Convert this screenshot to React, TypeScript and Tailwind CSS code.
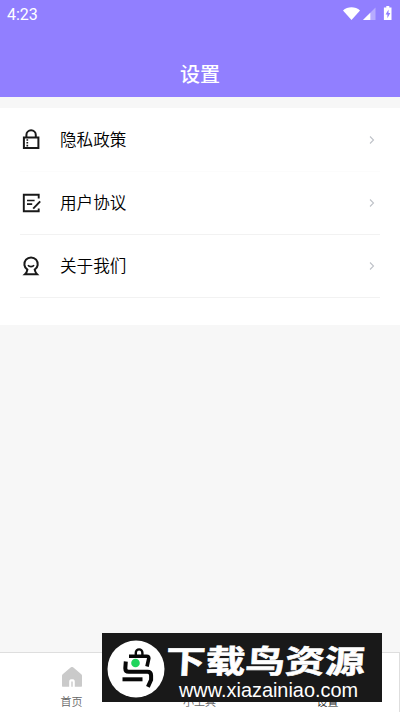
import type { ReactNode } from 'react'

type MenuRow = {
  label: string
  icon: ReactNode
  line: string
}

const ROWS: MenuRow[] = [
  { label: '隐私政策', icon: <LockIcon />, line: 'border-[#fcfcfc]' },
  { label: '用户协议', icon: <AgreementIcon />, line: 'border-[#f2f2f2]' },
  { label: '关于我们', icon: <AboutIcon />, line: 'border-[#f2f2f2]' },
]

export default function App() {
  return (
    <div className="relative flex h-[712px] w-[400px] flex-col overflow-hidden bg-[#f7f7f7] font-['Roboto','Noto_Sans_CJK_SC',sans-serif]">
      <header className="flex h-[97px] shrink-0 flex-col bg-[#917fff] text-white">
        <StatusBar />
        <h1 className="mt-[32px] text-center text-[20px] leading-[30px] font-medium">设置</h1>
      </header>

      <main className="mt-[11px] h-[217px] shrink-0 bg-white px-5 pt-px">
        {ROWS.map((row) => (
          <div key={row.label} className={`flex h-[63px] items-center border-b ${row.line}`}>
            {row.icon}
            <span className="mt-px ml-[18px] flex-1 text-[16.6px] leading-6 font-[350] text-black">{row.label}</span>
            <svg className="mr-1" width="8" height="10" viewBox="0 0 8 10" fill="none" stroke="#bfc2c8" strokeWidth="1.1">
              <path d="M2 1.5 5.5 5 2 8.5" />
            </svg>
          </div>
        ))}
      </main>

      <nav className="mt-auto flex h-[60px] shrink-0 border-t border-[#dedede] bg-white">
        <div className="flex flex-1 border-r border-[#dedede] px-[7.5px]">
          <Tab label="首页" icon={<HomeIcon />} />
          <Tab label="小工具" />
          <Tab label="设置" active />
        </div>
      </nav>

      <Banner />
    </div>
  )
}

function StatusBar() {
  return (
    <div className="flex h-7 items-center pr-[7px] pl-[7px]">
      <span className="mt-px flex-1 text-[16px] leading-7">4:23</span>
      <svg width="50" height="16" viewBox="0 0 50 16" fill="white">
        {/* wifi */}
        <path d="M0 4.5C4.5.2 12.5.2 17 4.5L8.5 14Z" />
        {/* signal */}
        <path d="M32.5 1.5V14H20Z" opacity=".35" />
        <path d="M27.3 6.7V14H20Z" />
        {/* battery */}
        <path d="M43.3 0h3v1.5h2.2V14h-7.6V1.5h2.4Z" />
        <path d="M45.5 3.5 42.6 8.5h1.8v3.7l2.9-5.2h-1.8Z" fill="#917fff" />
      </svg>
    </div>
  )
}

function Tab({ label, icon, active }: { label: string; icon?: ReactNode; active?: boolean }) {
  return (
    <div className="flex flex-1 flex-col items-center pt-[14px]">
      <div className="h-5">{icon}</div>
      <span className={`mt-[8px] text-[11px] leading-4 font-[350] ${active ? 'text-[#222]' : 'text-[#666]'}`}>{label}</span>
    </div>
  )
}

function LockIcon() {
  return (
    <svg width="22" height="22" viewBox="0 0 22 22" fill="none" stroke="#191919" strokeWidth="2">
      <path d="M3.9 8.4h14.5v10.7H3.9Z" />
      <path d="M6.4 8V6a4.7 4.7 0 0 1 9.4 0v2" />
      <path d="M7.3 10.2v7.5" strokeWidth="1.7" strokeDasharray="1.6 1.2" />
    </svg>
  )
}

function AgreementIcon() {
  return (
    <svg width="22" height="22" viewBox="0 0 22 22" fill="none" stroke="#191919" strokeWidth="1.9">
      <path d="M18.7 6.5V2.7H3.8v16.5h14.9v-2.7" />
      <path d="M7 8.5h7.6M7 12.2h5.2" strokeWidth="1.7" />
      <path d="m13.2 16.6 7-7.2" />
    </svg>
  )
}

function AboutIcon() {
  return (
    <svg width="22" height="22" viewBox="0 0 22 22" fill="none" stroke="#191919" strokeWidth="2">
      <path d="M7.4 14.7A6.7 6.7 0 1 1 14.7 14.7C15 16.7 15.8 18 17 19.2H5C6.3 18 7.1 16.7 7.4 14.7Z" />
      <path d="M8 10.1c1.2 2 4.8 2 6 0" strokeWidth="1.6" />
    </svg>
  )
}

function HomeIcon() {
  return (
    <svg width="22" height="20" viewBox="0 0 22 20">
      <path
        d="M9.6.6a2 2 0 0 1 2.8 0L20.3 7.2c.5.4.7.9.7 1.5v10.1c0 .7-.3 1-1 1h-6.2v-5c0-2-.9-2.6-2.8-2.6s-2.8.6-2.8 2.6v5H2c-.7 0-1-.3-1-1V8.7c0-.6.2-1.1.7-1.5Z"
        fill="#cacaca"
      />
      <path d="M11 14.5v5.3" stroke="#cacaca" strokeWidth="1.4" />
    </svg>
  )
}

// Site badge floating over the tab bar
function Banner() {
  return (
    <div className="absolute top-[633px] left-[102px] flex h-[69px] w-[280px] items-center bg-[#191919] text-white">
      <svg className="mt-[2px] ml-[5px] shrink-0" width="58" height="58" viewBox="0 0 58 58">
        <circle cx="29" cy="29" r="28.5" fill="white" />
        <g fill="none" stroke="#080808" strokeWidth="3.6">
          <path d="M22 16.3h17.7c1.5 0 2.1.7 2.1 2L40 26.5" />
          <path d="M18.8 21.5l-.5 6.8c0 2.5 1 3.5 3.5 3.5h18.7c2.5 0 3.6 1.2 3.6 3.6v4.4l-3.2 7" strokeWidth="4" />
          <path d="M15.5 39.3H35.5" strokeWidth="4" />
          <path d="M28.8 15v-2.3a3.3 3.3 0 0 1 6.6 0V15" strokeWidth="2.4" />
        </g>
        <circle cx="28.5" cy="23" r="4.3" fill="#20d55d" />
      </svg>
      <div className="ml-[2px] flex h-full flex-col whitespace-nowrap">
        <svg className="mt-[6px] shrink-0 overflow-visible" width="208" height="42" viewBox="0 0 208 42">
          <text
            x="0"
            y="34"
            textLength="199"
            lengthAdjust="spacingAndGlyphs"
            transform="skewX(-3)"
            fill="white"
            stroke="white"
            strokeWidth=".6"
            className="font-['Noto_Sans_CJK_SC',sans-serif] text-[32px] font-bold"
          >
            下载鸟资源
          </text>
        </svg>
        <span className="mt-[-1px] ml-[12px] font-['Liberation_Sans',sans-serif] text-[19.9px] leading-5">
          www.xiazainiao.com
        </span>
      </div>
    </div>
  )
}
